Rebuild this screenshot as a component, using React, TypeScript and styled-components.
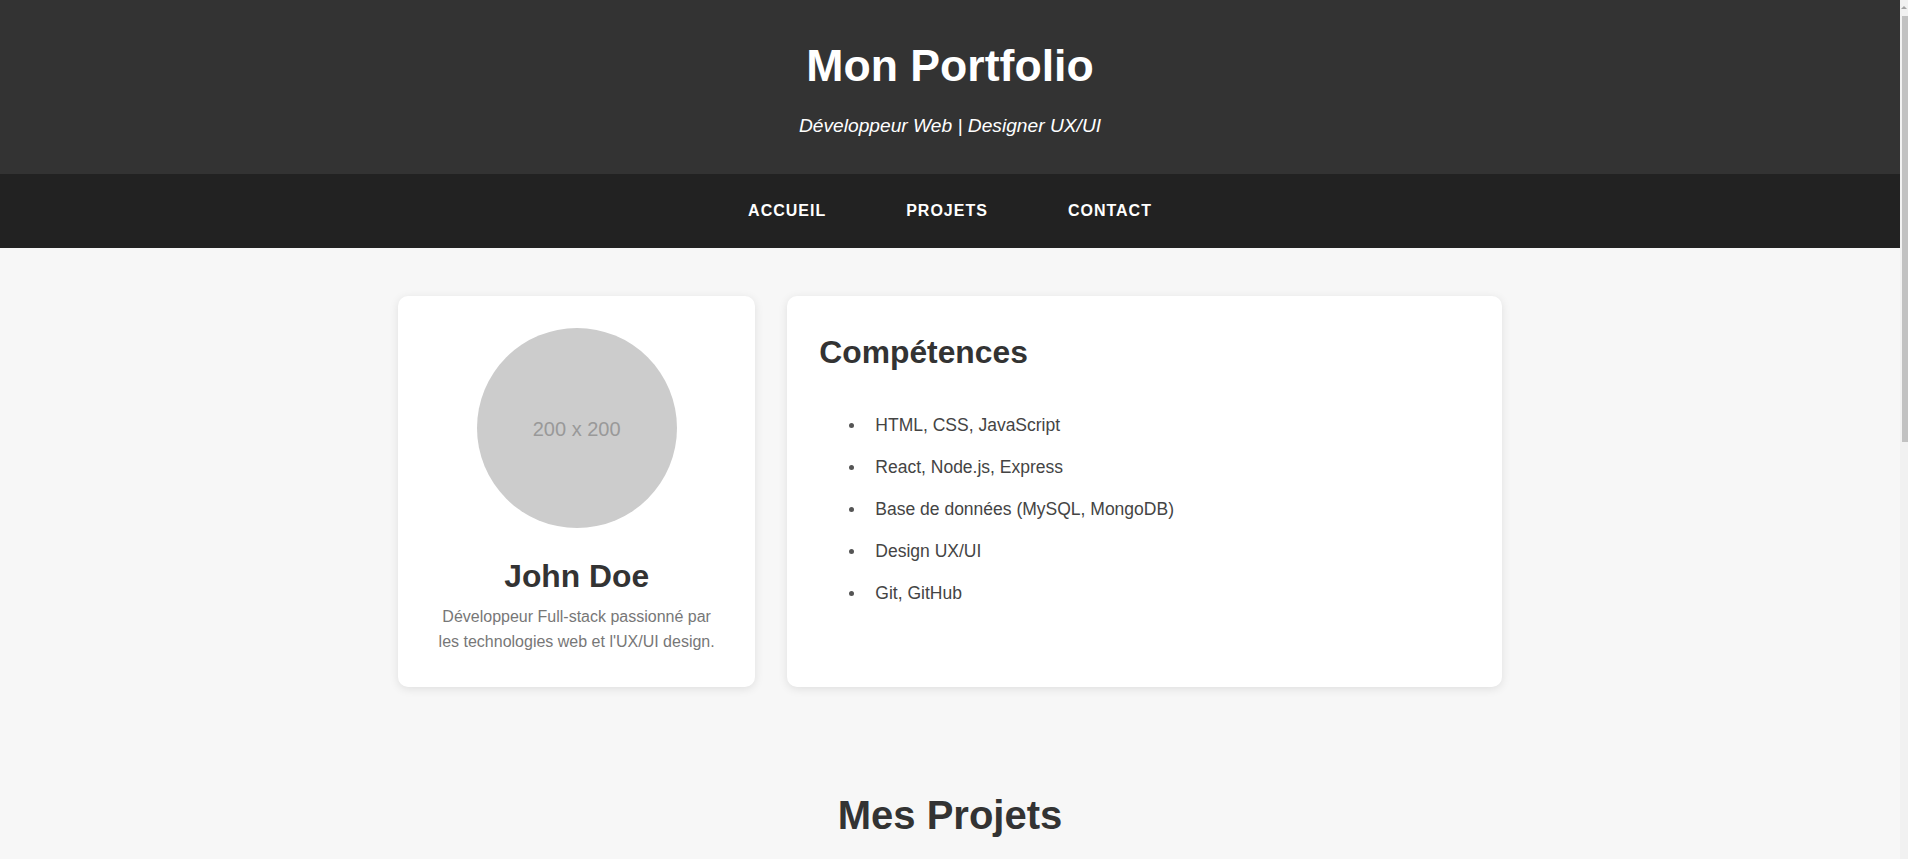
import styled, { createGlobalStyle } from "styled-components";

const GlobalStyle = createGlobalStyle`
  html {
    scrollbar-width: none;
  }

  body {
    margin: 0;
    background: #f7f7f7;
    font-family: "Liberation Sans", Arial, sans-serif;
    color: #333;
  }

  #root {
    padding-right: 8px;
  }
`;

// fake scrollbar, drawn over the right edge like the reference's
const ScrollTrack = styled.div`
  position: fixed;
  top: 0;
  right: 0;
  width: 8px;
  height: 100vh;
  background: #f1f1f1;
  z-index: 10;
`;

const ScrollArrow = styled.div`
  position: absolute;
  top: 6px;
  right: 1px;
  width: 0;
  height: 0;
  border-left: 3px solid transparent;
  border-right: 3px solid transparent;
  border-bottom: 3px solid #a3a3a3;
`;

const ScrollThumb = styled.div`
  position: absolute;
  top: 16px;
  left: 2px;
  right: 0;
  height: 426px;
  background: #c1c1c1;
`;

const Header = styled.header`
  background: #333;
  color: #fff;
  text-align: center;
  padding: 40px 20px 36.6px;
`;

const Title = styled.h1`
  margin: 0;
  font-size: 44.6px;
  line-height: 1.15;
  font-weight: 700;
`;

const Subtitle = styled.p`
  margin: 24px 0 0;
  font-size: 19.2px;
  line-height: 1.15;
  font-style: italic;
`;

const Nav = styled.nav`
  background: #222;
  height: 74px;
  display: flex;
  align-items: center;
  justify-content: center;
  gap: 80px;
`;

const NavLink = styled.a`
  color: #fff;
  text-decoration: none;
  text-transform: uppercase;
  font-weight: 700;
  font-size: 16px;
  letter-spacing: 1px;
`;

const Main = styled.main`
  width: 1104px;
  margin: 0 auto;
  padding: 48px 0 80px;
`;

const AboutGrid = styled.section`
  display: grid;
  grid-template-columns: 1fr 2fr;
  gap: 32px;
`;

const Card = styled.div<{ $centered?: boolean }>`
  background: #fff;
  border-radius: 10px;
  box-shadow: 0 2px 10px rgba(0, 0, 0, 0.1);
  padding: ${(p) => (p.$centered ? "32px 36px 33px" : "32px")};
  text-align: ${(p) => (p.$centered ? "center" : "left")};
  display: flex;
  flex-direction: column;
  align-items: ${(p) => (p.$centered ? "center" : "stretch")};
`;

const Avatar = styled.div`
  width: 200px;
  height: 200px;
  box-sizing: border-box;
  padding-top: 3px;
  border-radius: 50%;
  background: #ccc;
  color: #999;
  font-size: 20px;
  display: flex;
  align-items: center;
  justify-content: center;
`;

const CardTitle = styled.h2<{ $top: number; $bottom: number }>`
  margin: ${(p) => p.$top}px 0 ${(p) => p.$bottom}px;
  font-size: 31.8px;
  line-height: 1.15;
  font-weight: 700;
  color: #333;
`;

const Bio = styled.p`
  margin: 0;
  font-size: 16px;
  line-height: 25px;
  color: #777;
`;

const SkillList = styled.ul`
  margin: 0;
  padding-left: 56px;
  list-style: none;
  color: #444;
  font-size: 17.5px;
`;

const Skill = styled.li`
  position: relative;
  line-height: 28px;
  margin-bottom: 14.2px;

  &::before {
    content: "";
    position: absolute;
    left: -26px;
    top: 12px;
    width: 5px;
    height: 5px;
    border-radius: 50%;
    background: #555;
  }
`;

const Projects = styled.section`
  margin-top: 105px;
`;

const SectionTitle = styled.h2`
  margin: 0 0 40px;
  text-align: center;
  font-size: 40px;
  line-height: 1.15;
  font-weight: 700;
  color: #333;
`;

const ProjectGrid = styled.div`
  display: grid;
  grid-template-columns: repeat(3, 1fr);
  gap: 32px;
`;

const ProjectCard = styled.article`
  background: #fff;
  border-radius: 10px;
  box-shadow: 0 2px 10px rgba(0, 0, 0, 0.1);
  overflow: hidden;
`;

const ProjectThumb = styled.div`
  height: 200px;
  background: #ccc;
  color: #999;
  font-size: 20px;
  display: flex;
  align-items: center;
  justify-content: center;
`;

const ProjectBody = styled.div`
  padding: 24px;
`;

const ProjectName = styled.h3`
  margin: 0 0 10px;
  font-size: 22px;
  color: #333;
`;

const ProjectText = styled.p`
  margin: 0;
  font-size: 16px;
  line-height: 25px;
  color: #777;
`;

const Footer = styled.footer`
  background: #333;
  color: #fff;
  text-align: center;
  padding: 30px 20px;
  font-size: 16px;
`;

const skills = [
  "HTML, CSS, JavaScript",
  "React, Node.js, Express",
  "Base de données (MySQL, MongoDB)",
  "Design UX/UI",
  "Git, GitHub",
];

const projects = [
  { name: "Projet 1", text: "Application web de gestion de tâches avec React et Node.js." },
  { name: "Projet 2", text: "Site e-commerce responsive avec panier et paiement." },
  { name: "Projet 3", text: "Refonte UX/UI d'une application mobile de réservation." },
];

export default function App() {
  return (
    <>
      <GlobalStyle />
      <ScrollTrack>
        <ScrollArrow />
        <ScrollThumb />
      </ScrollTrack>
      <Header>
        <Title>Mon Portfolio</Title>
        <Subtitle>Développeur Web | Designer UX/UI</Subtitle>
      </Header>
      <Nav>
        <NavLink href="#accueil">Accueil</NavLink>
        <NavLink href="#projets">Projets</NavLink>
        <NavLink href="#contact">Contact</NavLink>
      </Nav>
      <Main>
        <AboutGrid id="accueil">
          <Card $centered>
            <Avatar>200 x 200</Avatar>
            <CardTitle $top={30} $bottom={9}>John Doe</CardTitle>
            <Bio>Développeur Full-stack passionné par les technologies web et l'UX/UI design.</Bio>
          </Card>
          <Card>
            <CardTitle $top={6} $bottom={40}>Compétences</CardTitle>
            <SkillList>
              {skills.map((s) => (
                <Skill key={s}>{s}</Skill>
              ))}
            </SkillList>
          </Card>
        </AboutGrid>
        <Projects id="projets">
          <SectionTitle>Mes Projets</SectionTitle>
          <ProjectGrid>
            {projects.map((p) => (
              <ProjectCard key={p.name}>
                <ProjectThumb>350 x 200</ProjectThumb>
                <ProjectBody>
                  <ProjectName>{p.name}</ProjectName>
                  <ProjectText>{p.text}</ProjectText>
                </ProjectBody>
              </ProjectCard>
            ))}
          </ProjectGrid>
        </Projects>
      </Main>
      <Footer id="contact">© 2024 John Doe. Tous droits réservés.</Footer>
    </>
  );
}
